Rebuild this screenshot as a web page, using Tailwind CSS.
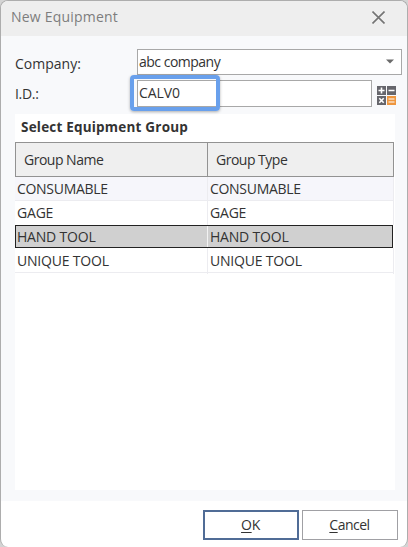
<!DOCTYPE html>
<html lang="en">
<head>
    <meta charset="UTF-8">
    <meta name="viewport" content="width=device-width, initial-scale=1.0">
    <title>New Equipment</title>
    <script src="https://cdn.jsdelivr.net/npm/@tailwindcss/browser@4"></script>
</head>
<body class="bg-[#d4d4d4] overflow-hidden font-['Open_Sans','Noto_Sans',sans-serif] text-[14px] leading-[20px] text-[#333333]">
    <div class="w-[408px] h-[547px] flex flex-col bg-white border-x border-t border-[#adadad] rounded-[8px] overflow-hidden">
        <!-- Title bar -->
        <div class="h-[35px] shrink-0 bg-[#eeeeee] flex items-center justify-between pl-[10px] pr-[22px] pb-[3px]">
            <h1 class="text-[#7d7d7d] tracking-[0.2px]">New Equipment</h1>
            <svg class="w-[13px] h-[13px]" viewBox="0 0 13 13" fill="none" stroke="#747474" stroke-width="1.6">
                <path d="M0.5 0.5L12.5 12.5M12.5 0.5L0.5 12.5"/>
            </svg>
        </div>

        <!-- Form -->
        <div class="h-[465px] shrink-0 bg-[#f8f9fb] pt-[13px]">
            <div class="flex h-[26px]">
                <label class="w-[136px] pl-[14px] pt-[5px]">Company:</label>
                <div class="w-[265px] bg-white border border-[#a8a8a8] flex items-center justify-between pl-[1px] pr-[7px] pb-[1px]">
                    <span class="tracking-[-0.5px]">abc company</span>
                    <svg class="w-[8px] h-[5px]" viewBox="0 0 8 5"><path d="M0 0.5H8L4 4.5Z" fill="#6b6b6b"/></svg>
                </div>
            </div>
            <div class="flex h-[27px] mt-[5px]">
                <label class="w-[136px] pl-[14px] pt-[4px] tracking-[-0.3px]">I.D.:</label>
                <div class="relative w-[235px] bg-white border border-[#a8a8a8] pl-[1px] pt-[2px]">
                    <span class="tracking-[-0.1px]">CALV0</span>
                    <div class="absolute left-[-8px] top-[-6px] w-[90px] h-[36px] border-4 border-[#69a0ec] rounded-[4px] shadow-[0_1px_3px_rgba(0,0,0,0.3)]"></div>
                </div>
                <svg class="w-[19px] h-[19px] ml-[5px] mt-[6px]" viewBox="0 0 19 19" fill="none">
                    <path d="M0 0H9V9H0ZM10 0H19V9H10ZM0 10H9V19H0Z" fill="#66666c"/>
                    <path d="M10 10H19V19H10Z" fill="#ee963e"/>
                    <path d="M1.5 4.5H7.5M4.5 1.5V7.5M11.5 4.5H17.5M2.3 12.3L6.7 16.7M6.7 12.3L2.3 16.7" stroke="#fff" stroke-width="1.6"/>
                    <path d="M11.5 13H17.5M11.5 16H17.5" stroke="#fff" stroke-width="1.2"/>
                </svg>
            </div>

            <!-- Equipment groups -->
            <div class="ml-[14px] mt-[7px] w-[380px] h-[376px] bg-white">
                <h2 class="h-[28px] pl-[6px] pt-[3px] font-bold text-[13.5px] tracking-[0.2px]">Select Equipment Group</h2>
                <div class="grid grid-cols-[192px_187px] w-[379px] h-[35px] bg-[#efefef] border border-[#929292] leading-[33px] tracking-[-0.5px]">
                    <div class="pl-[8px] border-r border-[#929292]">Group Name</div>
                    <div class="pl-[8px]">Group Type</div>
                </div>
                <div class="grid grid-cols-[193px_186px] w-[379px] h-[24px] leading-[23px] tracking-[-0.3px] bg-[#f6f6fb] border-b border-[#ececf0]">
                    <div class="pl-[2px] border-r border-[#ececf0]">CONSUMABLE</div>
                    <div class="pl-[2px] border-r border-[#ececf0]">CONSUMABLE</div>
                </div>
                <div class="grid grid-cols-[193px_186px] w-[379px] h-[24px] leading-[23px] tracking-[-0.2px]">
                    <div class="pl-[2px] border-r border-[#ececf0]">GAGE</div>
                    <div class="pl-[2px] border-r border-[#ececf0]">GAGE</div>
                </div>
                <div class="grid grid-cols-[192px_185px] w-[378px] h-[23px] leading-[21px] tracking-[-0.2px] bg-[#d0d0d0] border border-[#222222]">
                    <div class="pl-[1px] border-r border-[#f2f2f2]">HAND TOOL</div>
                    <div class="pl-[2px]">HAND TOOL</div>
                </div>
                <div class="grid grid-cols-[193px_186px] w-[379px] h-[25px] leading-[26px] tracking-[-0.2px] border-b border-[#ececf0]">
                    <div class="pl-[2px] border-r border-[#ececf0]">UNIQUE TOOL</div>
                    <div class="pl-[2px] border-r border-[#ececf0]">UNIQUE TOOL</div>
                </div>
            </div>
        </div>

        <!-- Buttons -->
        <div class="flex justify-end gap-[3px] pt-[9px] pr-[9px]">
            <button class="w-[96px] h-[30px] bg-white border-2 border-[#506c96] pr-[1px] tracking-[-0.3px]"><span class="underline underline-offset-2">O</span>K</button>
            <button class="w-[96px] h-[30px] bg-white border border-[#a0a0a4] pr-[1px] tracking-[-0.5px]"><span class="underline underline-offset-2">C</span>ancel</button>
        </div>
    </div>
</body>
</html>
